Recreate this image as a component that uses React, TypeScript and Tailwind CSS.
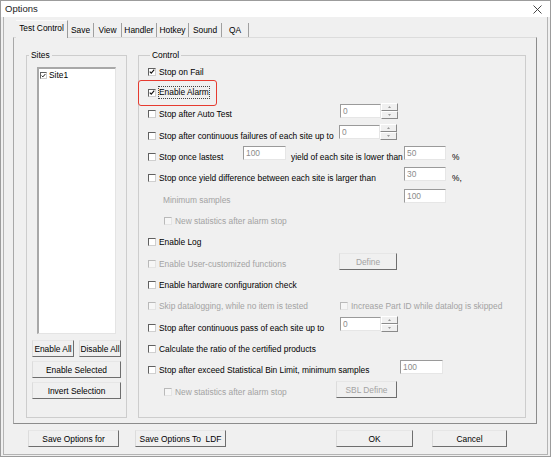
import React from "react";
import clsx from "clsx";

function Check({ checked, disabled, small }: { checked?: boolean; disabled?: boolean; small?: boolean }) {
  return (
    <span
      className={clsx(
        "inline-flex shrink-0 items-center justify-center border",
        small ? "w-[7px] h-[7px]" : "w-[8px] h-[8px]",
        disabled
          ? "bg-[#f6f6f6] border-t-[#b9b9b9] border-l-[#b9b9b9] border-r-[#e4e4e4] border-b-[#e4e4e4]"
          : "bg-white border-t-[#606060] border-l-[#606060] border-r-[#cfcfcf] border-b-[#cfcfcf]"
      )}
    >
      {checked && (
        <svg viewBox="0 0 8 8" className="w-[7px] h-[7px]">
          <path d="M1 4.2 L3 6.2 L7 1.6" stroke="#111" strokeWidth="1.5" fill="none" />
        </svg>
      )}
    </span>
  );
}

function TextBox({ value, w }: { value: string; w: string }) {
  return (
    <div
      className={clsx(
        "h-[14px] shrink-0 bg-white pl-[2px] leading-[12px] text-[#8c8c8c] border border-t-[#9a9a9a] border-l-[#9a9a9a] border-r-[#e6e6e6] border-b-[#e6e6e6]",
        w
      )}
    >
      {value}
    </div>
  );
}

function Spin({ value }: { value: string }) {
  return (
    <div className="flex shrink-0 items-center mb-[7px]">
      <TextBox value={value} w="w-[41px]" />
      <div className="flex h-[16px] w-[17px] flex-col">
        {[0, 1].map((i) => (
          <div
            key={i}
            className="flex h-[8px] items-center justify-center border border-t-white border-l-white border-r-[#8a8a8a] border-b-[#8a8a8a] bg-[#f0f0f0]"
          >
            <svg viewBox="0 0 3 2" className="w-[3px] h-[2px]">
              <path d={i === 0 ? "M0 2 L1.5 0 L3 2 Z" : "M0 0 L1.5 2 L3 0 Z"} fill="#9a9a9a" />
            </svg>
          </div>
        ))}
      </div>
    </div>
  );
}

function Btn({ children, w, disabled, cls }: { children: React.ReactNode; w: string; disabled?: boolean; cls?: string }) {
  return (
    <div
      className={clsx(
        "flex h-[17px] shrink-0 items-center justify-center border bg-[#f0f0f0] border-t-[#e6e6e6] border-l-[#dcdcdc] border-r-[#6e6e6e] border-b-[#6e6e6e] whitespace-nowrap",
        disabled ? "text-[#a3a3a3]" : "text-black",
        w,
        cls
      )}
    >
      {children}
    </div>
  );
}

function Row({ children, cls }: { children: React.ReactNode; cls?: string }) {
  return <div className={clsx("relative flex h-[21.33px] items-center", cls)}>{children}</div>;
}

function Label({ children, disabled }: { children: React.ReactNode; disabled?: boolean }) {
  return (
    <span className={clsx("ml-[3px] whitespace-nowrap", disabled ? "text-[#a3a3a3]" : "text-black")}>{children}</span>
  );
}

const tabs = [
  { name: "Save", w: "w-[26px]" },
  { name: "View", w: "w-[28px]" },
  { name: "Handler", w: "w-[35px]" },
  { name: "Hotkey", w: "w-[32px]" },
  { name: "Sound", w: "w-[33px]" },
  { name: "QA", w: "w-[27px]" },
];

export default function App() {
  return (
    <div className="flex h-[457px] w-[551px] flex-col border border-[#9c9c9c] bg-white font-['Liberation_Sans',Arial,sans-serif] text-[8.4px] leading-[10px] text-black">
      {/* Title bar */}
      <div className="flex h-[16px] shrink-0 items-center justify-between pl-[4px] pr-[8px] bg-white">
        <span className="text-[9.5px] text-[#222]">Options</span>
        <svg viewBox="0 0 9 9" className="w-[9px] h-[9px]">
          <path d="M0.5 0.5 L8.5 8.5 M8.5 0.5 L0.5 8.5" stroke="#333" strokeWidth="0.9" />
        </svg>
      </div>

      <div className="flex-1 bg-[#f0f0f0] px-[2px] pb-[1px]">
        <div className="h-full border-l border-r border-b border-[#b4b4b4] pl-[9px] pr-[10px] pt-[3px]">
          {/* Tabs */}
          <div className="flex h-[17px] items-end pl-[3px]">
            <div className="relative z-10 -mb-[1px] flex h-[18px] w-[52px] items-center justify-center border-t border-r border-t-[#fafafa] border-r-[#9a9a9a] bg-[#f0f0f0] pb-[3px]">
              Test Control
            </div>
            {tabs.map((t) => (
              <div key={t.name} className={clsx("flex h-[14px] items-center justify-center border-r border-[#a0a0a0]", t.w)}>
                {t.name}
              </div>
            ))}
          </div>

          {/* Tab page */}
          <div className="flex h-[387px] gap-[11px] border border-t-[#dcdcdc] border-l-[#a8a8a8] border-r-[#8c8c8c] border-b-[#8c8c8c] pl-[12px] pt-[12px]">
            {/* Sites */}
            <fieldset className="flex h-[368px] w-[101px] shrink-0 flex-col border border-[#cdcdcd]">
              <legend className="ml-[2px] px-[2px] leading-[10px]">Sites</legend>
              <div className="ml-[10px] mt-[7px] h-[267px] w-[79px] border-t-2 border-l-2 border-r border-b border-t-[#a8a8a8] border-l-[#a8a8a8] border-r-[#e4e4e4] border-b-[#e4e4e4] bg-white">
                <div className="ml-[1px] mt-[1px] flex h-[10px] items-center">
                  <Check checked small />
                  <span className="ml-[2px]">Site1</span>
                </div>
              </div>
              <div className="ml-[5px] mt-[6px] flex gap-[5px]">
                <Btn w="w-[42px]">Enable All</Btn>
                <Btn w="w-[42px]">Disable All</Btn>
              </div>
              <Btn w="w-[89px]" cls="ml-[5px] mt-[4px]">Enable Selected</Btn>
              <Btn w="w-[89px]" cls="ml-[5px] mt-[4px]">Invert Selection</Btn>
            </fieldset>

            {/* Control */}
            <fieldset className="h-[368px] w-[388px] shrink-0 border border-[#cdcdcd] pl-[9px] pt-[1px]">
              <legend className="ml-[2px] px-[2px] leading-[10px]">Control</legend>

              <Row>
                <Check checked />
                <Label>Stop on Fail</Label>
              </Row>

              <Row>
                <div className="absolute -left-[10px] -top-[2px] h-[26px] w-[79px] rounded-[3px] border-[1.5px] border-[#e63b30]" />
                <Check checked />
                <span className="ml-[2px] border border-dotted border-[#444] leading-[11px] whitespace-nowrap">Enable Alarm</span>
              </Row>

              <Row>
                <div className="flex w-[192px] shrink-0 items-center">
                  <Check />
                  <Label>Stop after Auto Test</Label>
                </div>
                <Spin value="0" />
              </Row>

              <Row>
                <div className="flex w-[191px] shrink-0 items-center">
                  <Check />
                  <Label>Stop after continuous failures of each site up to</Label>
                </div>
                <Spin value="0" />
              </Row>

              <Row>
                <div className="flex w-[95px] shrink-0 items-center">
                  <Check />
                  <Label>Stop once lastest</Label>
                </div>
                <div className="mb-[8px]">
                  <TextBox value="100" w="w-[43px]" />
                </div>
                <span className="ml-[5px] w-[113px] shrink-0 whitespace-nowrap">yield of each site is lower than</span>
                <div className="mb-[8px]">
                  <TextBox value="50" w="w-[42px]" />
                </div>
                <span className="ml-[6px]">%</span>
              </Row>

              <Row>
                <div className="flex w-[256px] shrink-0 items-center">
                  <Check />
                  <Label>Stop once yield difference between each site is larger than</Label>
                </div>
                <div className="mb-[8px]">
                  <TextBox value="30" w="w-[42px]" />
                </div>
                <span className="ml-[6px]">%,</span>
              </Row>

              <Row>
                <span className="w-[256px] shrink-0 pl-[15px] text-[#a3a3a3]">Minimum samples</span>
                <div className="mb-[7px]">
                  <TextBox value="100" w="w-[42px]" />
                </div>
              </Row>

              <Row cls="pl-[16px]">
                <Check disabled />
                <Label disabled>New statistics after alarm stop</Label>
              </Row>

              <Row>
                <Check />
                <Label>Enable Log</Label>
              </Row>

              <Row>
                <div className="flex w-[191px] shrink-0 items-center">
                  <Check disabled />
                  <Label disabled>Enable User-customized functions</Label>
                </div>
                <Btn w="w-[58px]" disabled cls="mb-[4px]">Define</Btn>
              </Row>

              <Row>
                <Check />
                <Label>Enable hardware configuration check</Label>
              </Row>

              <Row>
                <div className="flex w-[192px] shrink-0 items-center">
                  <Check disabled />
                  <Label disabled>Skip datalogging, while no item is tested</Label>
                </div>
                <Check disabled />
                <Label disabled>Increase Part ID while datalog is skipped</Label>
              </Row>

              <Row>
                <div className="flex w-[192px] shrink-0 items-center">
                  <Check />
                  <Label>Stop after continuous pass of each site up to</Label>
                </div>
                <Spin value="0" />
              </Row>

              <Row>
                <Check />
                <Label>Calculate the ratio of the certified products</Label>
              </Row>

              <Row>
                <div className="flex w-[252px] shrink-0 items-center">
                  <Check />
                  <Label>Stop after exceed Statistical Bin Limit, minimum samples</Label>
                </div>
                <div className="mb-[6px]">
                  <TextBox value="100" w="w-[43px]" />
                </div>
              </Row>

              <Row>
                <div className="flex w-[188px] shrink-0 items-center pl-[16px]">
                  <Check disabled />
                  <Label disabled>New statistics after alarm stop</Label>
                </div>
                <Btn w="w-[61px]" disabled cls="mb-[4px]">SBL Define</Btn>
              </Row>
            </fieldset>
          </div>

          {/* Bottom buttons */}
          <div className="mt-[6px] flex">
            <Btn w="w-[91px]" cls="ml-[15px]">Save Options for</Btn>
            <Btn w="w-[91px]" cls="ml-[16px]">Save Options To&nbsp;&nbsp;LDF</Btn>
            <Btn w="w-[77px]" cls="ml-[110px]">OK</Btn>
            <Btn w="w-[75px]" cls="ml-[19px]">Cancel</Btn>
          </div>
        </div>
      </div>
    </div>
  );
}
